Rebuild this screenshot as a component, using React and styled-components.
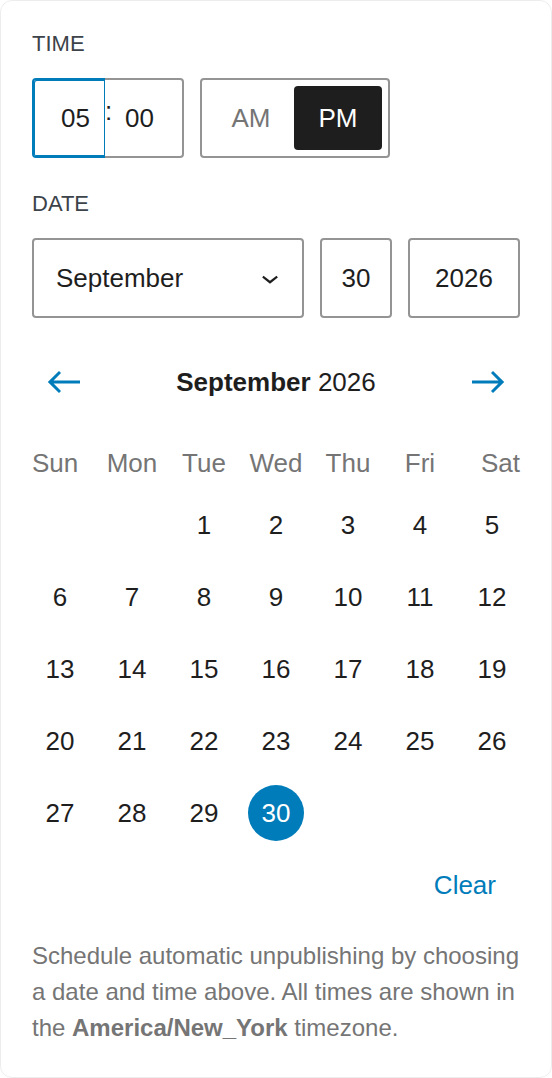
import React from 'react'
import styled, { createGlobalStyle } from 'styled-components'

const GlobalStyle = createGlobalStyle`
  html, body {
    margin: 0;
    padding: 0;
    background: #fff;
  }
  body {
    font-family: "Liberation Sans", Arial, sans-serif;
    color: #1e1e1e;
  }
  * { box-sizing: border-box; }
`

const BLUE = '#007cba'
const BORDER = '#949494'

const Card = styled.div`
  width: 552px;
  border: 1px solid #ededed;
  border-radius: 12px;
  background: #fff;
  padding: 31px;
  display: flex;
  flex-direction: column;
`

const Fieldset = styled.div`
  display: flex;
  flex-direction: column;
  margin-bottom: ${({ $gap }) => $gap || 0}px;
`

const Legend = styled.div`
  font-size: 22px;
  line-height: 24px;
  text-transform: uppercase;
  color: #3c434a;
  margin-bottom: 22px;
`

const Row = styled.div`
  display: flex;
  align-items: center;
  gap: 16px;
`

const TimeWrap = styled.div`
  display: flex;
  align-items: stretch;
  height: 80px;
`

const HourBox = styled.div`
  width: 73px;
  border: 2px solid ${BLUE};
  border-right-width: 1px;
  border-radius: 4px 0 0 4px;
  box-shadow: inset 1px 1px 0 ${BLUE}, inset 0 -1px 0 ${BLUE};
  display: flex;
  align-items: center;
  justify-content: flex-end;
  padding-right: 14px;
  font-size: 26px;
`

const Colon = styled.span`
  width: 7px;
  border-top: 2px solid ${BORDER};
  border-bottom: 2px solid ${BORDER};
  display: flex;
  align-items: center;
  padding-bottom: 14px;
  font-size: 26px;
  color: #1e1e1e;
`

const MinuteBox = styled.div`
  width: 72px;
  border: 2px solid ${BORDER};
  border-left: none;
  border-radius: 0 4px 4px 0;
  display: flex;
  align-items: center;
  padding-left: 13px;
  font-size: 26px;
`

const Toggle = styled.div`
  width: 190px;
  height: 80px;
  border: 2px solid ${BORDER};
  border-radius: 4px;
  padding: 6px;
  display: flex;
`

const ToggleOption = styled.div`
  flex: ${({ $w }) => `0 0 ${$w}px`};
  display: flex;
  align-items: center;
  justify-content: center;
  font-size: 26px;
  border-radius: 4px;
  color: ${({ $active }) => ($active ? '#fff' : '#757575')};
  background: ${({ $active }) => ($active ? '#1e1e1e' : 'transparent')};
`

const Field = styled.div`
  height: 80px;
  width: ${({ $w }) => ($w ? `${$w}px` : 'auto')};
  flex: ${({ $w }) => ($w ? 'none' : '1')};
  border: 2px solid ${BORDER};
  border-radius: 4px;
  display: flex;
  align-items: center;
  justify-content: ${({ $select }) => ($select ? 'space-between' : 'center')};
  padding: ${({ $select }) => ($select ? '0 15px 0 22px' : '0')};
  font-size: 26px;
`

const Chevron = styled.svg`
  width: 34px;
  height: 34px;
  fill: #1e1e1e;
`

const CalHeader = styled.div`
  display: flex;
  align-items: center;
  justify-content: space-between;
  height: 64px;
  margin-bottom: 31px;
`

const NavButton = styled.button`
  width: 64px;
  height: 64px;
  border: none;
  background: none;
  padding: 0;
  display: flex;
  align-items: center;
  justify-content: center;
  cursor: pointer;

  svg {
    width: 48px;
    height: 48px;
    fill: ${BLUE};
  }
`

const Title = styled.div`
  font-size: 26px;
  color: #1e1e1e;

  strong { font-weight: 700; }
`

const Grid = styled.div`
  display: grid;
  grid-template-columns: 64px repeat(5, 1fr) 64px;
  justify-items: center;
  row-gap: 16px;
`

const DayName = styled.div`
  font-size: 26px;
  line-height: 36px;
  color: #757575;

  &:nth-child(1) { justify-self: start; }
  &:nth-child(7) { justify-self: end; }
`

const Day = styled.div`
  grid-column: ${({ $col }) => $col};
  justify-self: ${({ $col }) => ($col === 1 ? 'start' : $col === 7 ? 'end' : 'center')};
  width: 56px;
  height: 56px;
  border-radius: 50%;
  display: flex;
  align-items: center;
  justify-content: center;
  font-size: 26px;
  color: ${({ $selected }) => ($selected ? '#fff' : '#1e1e1e')};
  background: ${({ $selected }) => ($selected ? BLUE : 'transparent')};
`

const Footer = styled.div`
  display: flex;
  justify-content: flex-end;
  margin-top: 20px;
`

const ClearButton = styled.button`
  height: 48px;
  padding: 0 24px;
  border: none;
  background: none;
  font-family: inherit;
  font-size: 26px;
  color: ${BLUE};
  cursor: pointer;
`

const Help = styled.p`
  margin: 29px 0 0;
  font-size: 24px;
  line-height: 36px;
  color: #757575;

  strong { font-weight: 700; }
`

const dayNames = ['Sun', 'Mon', 'Tue', 'Wed', 'Thu', 'Fri', 'Sat']

// September 2026 starts on a Tuesday
const FIRST_DAY = 2
const days = Array.from({ length: 30 }, (_, i) => i + 1)

export default function App() {
  return (
    <>
      <GlobalStyle />
      <Card>
        <Fieldset $gap={34}>
          <Legend>Time</Legend>
          <Row>
            <TimeWrap>
              <HourBox>05</HourBox>
              <Colon>:</Colon>
              <MinuteBox>00</MinuteBox>
            </TimeWrap>
            <Toggle>
              <ToggleOption $w={86}>AM</ToggleOption>
              <ToggleOption $w={88} $active>PM</ToggleOption>
            </Toggle>
          </Row>
        </Fieldset>

        <Fieldset $gap={32}>
          <Legend>Date</Legend>
          <Row>
            <Field $select>
              <span>September</span>
              <Chevron viewBox="0 0 24 24">
                <path d="M17.5 11.6L12 16l-5.5-4.4.9-1.2L12 14l4.6-3.6 1 1.2z" />
              </Chevron>
            </Field>
            <Field $w={72}>30</Field>
            <Field $w={112}>2026</Field>
          </Row>
        </Fieldset>

        <CalHeader>
          <NavButton aria-label="View previous month">
            <svg viewBox="0 0 24 24">
              <path d="M20 11.2H6.8l3.7-3.7-1-1L3.9 12l5.6 5.5 1-1-3.7-3.7H20z" />
            </svg>
          </NavButton>
          <Title>
            <strong>September</strong> 2026
          </Title>
          <NavButton aria-label="View next month">
            <svg viewBox="0 0 24 24">
              <path d="m14.5 6.5-1 1 3.7 3.7H4v1.6h13.2l-3.7 3.7 1 1 5.6-5.5z" />
            </svg>
          </NavButton>
        </CalHeader>

        <Grid>
          {dayNames.map((d) => (
            <DayName key={d}>{d}</DayName>
          ))}
          {days.map((d) => {
            const col = ((FIRST_DAY + d - 1) % 7) + 1
            return (
              <Day key={d} $col={col} $selected={d === 30}>
                {d}
              </Day>
            )
          })}
        </Grid>

        <Footer>
          <ClearButton>Clear</ClearButton>
        </Footer>

        <Help>
          Schedule automatic unpublishing by choosing a date and time above. All times are shown in
          the <strong>America/New_York</strong> timezone.
        </Help>
      </Card>
    </>
  )
}
